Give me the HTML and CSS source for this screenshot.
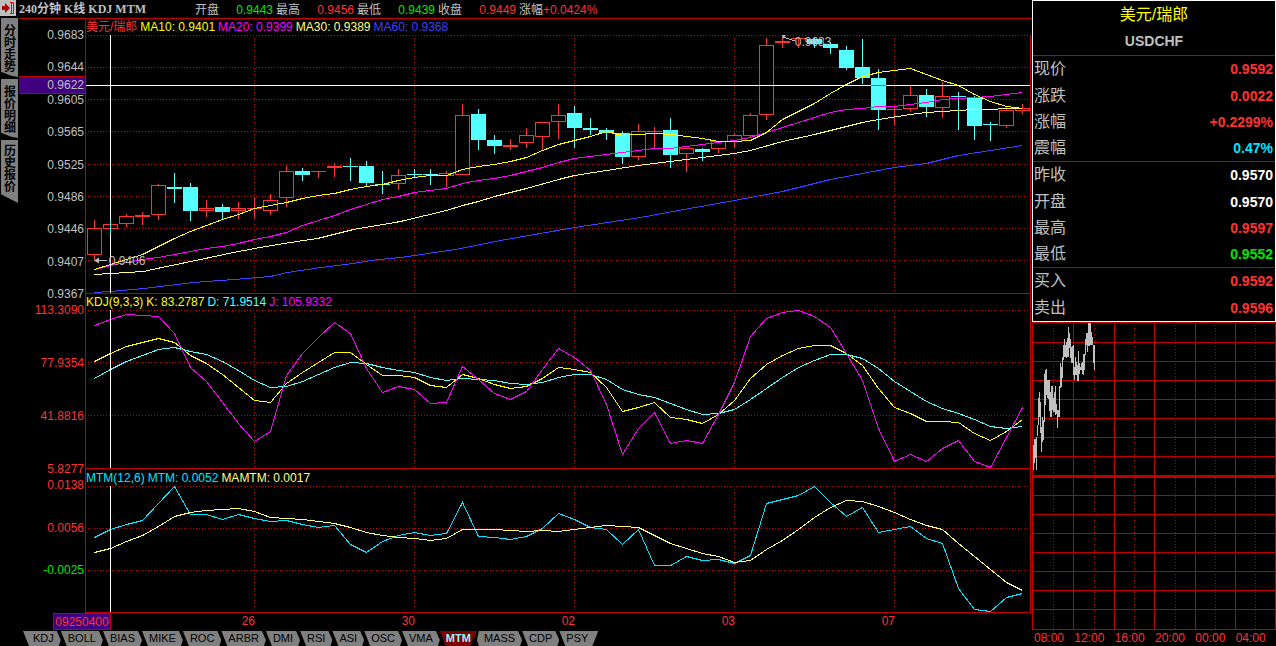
FILE: index.html
```html
<!DOCTYPE html>
<html lang="zh-CN">
<head>
  <meta charset="utf-8">
  <title>美元/瑞郎 USDCHF</title>
  <link rel="stylesheet" href="styles.css">
</head>
<body>
<div class="app">

  <!-- left rail -->
  <nav class="rail">
    <button class="exit" aria-label="退出">
      <svg width="16" height="16" viewBox="0 0 16 16">
        <rect width="16" height="16" fill="#c0c0c0"/>
        <path d="M2 6h3V3l5 5-5 5v-3H2z" fill="#b00000"/>
        <path d="M10 2.500h3.500v11H10M11.500 3v10" fill="none" stroke="#e01010"/>
      </svg>
    </button>
    <button class="rail-tab">分时走势</button>
    <button class="rail-tab">报价明细</button>
    <button class="rail-tab last">历史报价</button>
  </nav>

  <!-- charts -->
  <main class="main">
    <header class="top">
      <h1>240分钟 K线 KDJ MTM</h1>
      <div class="ohlc">
        <div><span>开盘</span><span class="green">0.9443</span></div>
        <div><span>最高</span><span class="red">0.9456</span></div>
        <div><span>最低</span><span class="green">0.9439</span></div>
        <div><span>收盘</span><span class="red">0.9449</span></div>
        <div><span>涨幅</span><span class="red">+0.0424%</span></div>
      </div>
    </header>

    <section class="pane pane-k">
      <ul class="axis">
        <li>0.9683</li><li>0.9644</li><li>0.9605</li><li>0.9565</li><li>0.9525</li>
        <li>0.9486</li><li>0.9446</li><li>0.9407</li><li>0.9367</li>
      </ul>
      <span class="price-tag">0.9622</span>
      <div class="plot">
        <div class="legend">
          <span class="red">美元/瑞郎</span>
          <span class="yellow">MA10: 0.9401</span>
          <span class="magenta">MA20: 0.9399</span>
          <span class="pale">MA30: 0.9389</span>
          <span class="blue">MA60: 0.9368</span>
        </div>
        <svg id="kline" viewBox="86 35 944 258" preserveAspectRatio="none"></svg>
        <span class="mark mark-low">0.9406</span>
        <span class="mark mark-high">0.9683</span>
      </div>
    </section>

    <section class="pane pane-kdj">
      <ul class="axis red">
        <li>113.3090</li><li>77.9354</li><li>41.8816</li><li>5.8277</li>
      </ul>
      <div class="plot">
        <div class="legend">
          <span class="yellow">KDJ(9,3,3)</span>
          <span class="yellow">K: 83.2787</span>
          <span class="cyan">D: 71.9514</span>
          <span class="magenta">J: 105.9332</span>
        </div>
        <svg id="kdj" viewBox="86 310 944 158" preserveAspectRatio="none"></svg>
      </div>
    </section>

    <section class="pane pane-mtm">
      <ul class="axis red">
        <li>0.0138</li><li>0.0056</li><li class="green">-0.0025</li><li></li>
      </ul>
      <div class="plot">
        <div class="legend">
          <span class="aqua">MTM(12,6)</span>
          <span class="aqua">MTM: 0.0052</span>
          <span class="pale">MAMTM: 0.0017</span>
        </div>
        <svg id="mtm" viewBox="86 486 944 126" preserveAspectRatio="none"></svg>
      </div>
    </section>

    <div class="dates">
      <span class="date-tag">09250400</span>
      <span>26</span><span>30</span><span>02</span><span>03</span><span>07</span>
    </div>

    <div class="tabs">
      <button>KDJ</button>
      <button>BOLL</button>
      <button>BIAS</button>
      <button>MIKE</button>
      <button>ROC</button>
      <button>ARBR</button>
      <button>DMI</button>
      <button>RSI</button>
      <button>ASI</button>
      <button>OSC</button>
      <button>VMA</button>
      <button class="active">MTM</button>
      <button class="after">MASS</button>
      <button>CDP</button>
      <button class="end">PSY</button>
    </div>
  </main>

  <!-- quote -->
  <aside class="side">
    <div class="quote">
      <h2>美元/瑞郎</h2>
      <p class="code">USDCHF</p>
      <table>
        <tr class="line"><th scope="row">现价</th><td class="red">0.9592</td></tr>
        <tr><th scope="row">涨跌</th><td class="red">0.0022</td></tr>
        <tr><th scope="row">涨幅</th><td class="red">+0.2299%</td></tr>
        <tr><th scope="row">震幅</th><td class="aqua">0.47%</td></tr>
        <tr class="line"><th scope="row">昨收</th><td>0.9570</td></tr>
        <tr><th scope="row">开盘</th><td>0.9570</td></tr>
        <tr><th scope="row">最高</th><td class="red">0.9597</td></tr>
        <tr><th scope="row">最低</th><td class="green">0.9552</td></tr>
        <tr class="line"><th scope="row">买入</th><td class="red">0.9592</td></tr>
        <tr><th scope="row">卖出</th><td class="red">0.9596</td></tr>
      </table>
    </div>
    <svg id="tick" viewBox="1032 322 244 308" preserveAspectRatio="none"></svg>
    <div class="hours">
      <span>08:00</span><span>12:00</span><span>16:00</span><span>20:00</span><span>00:00</span><span>04:00</span>
    </div>
  </aside>

</div>
<script src="chart.js"></script>
</body>
</html>
```

FILE: styles.css
```css
* {
  box-sizing: border-box;
}
body {
  margin: 0;
  background: #000;
  color: #c0c0c0;
  font: 12px/16px "Liberation Sans", Arial, "Noto Sans CJK SC", sans-serif;
}
h1, h2, p, ul {
  margin: 0;
  padding: 0;
}
button {
  border: 0;
  padding: 0;
  font: inherit;
  cursor: pointer;
}

/* text colours */
.red { color: #ff3232; }
.green { color: #00e600; }
.yellow { color: #ffff00; }
.magenta { color: #ff00ff; }
.pale { color: #ffff80; }
.blue { color: #4040ff; }
.cyan { color: #54ffff; }
.aqua { color: #00e6ff; }

.app {
  display: grid;
  grid-template-columns: 19px minmax(0, 1fr) 244px;
  grid-template-rows: minmax(0, 1fr);
  height: 100vh;
  min-height: 600px;
}

/* left rail */
.rail {
  display: flex;
  flex-direction: column;
  gap: 2px;
  padding-right: 1px;
}
.exit {
  height: 16px;
  background: none;
  text-align: left;
}
.exit svg {
  display: block;
}
.rail-tab {
  height: 59px;
  margin-left: 1px;
  padding: 2px 2px 0 3px;
  background: #808080;
  color: #000;
  font-weight: bold;
  line-height: 12px;
  word-break: break-all;
  display: block;
  clip-path: polygon(0 0, 100% 0, 100% 100%, 60% 98%, 0 91%);
}
.rail-tab.last {
  height: 63px;
  padding: 0 2px 5px 3px;
  clip-path: polygon(0 0, 100% 0, 100% 100%, 0 86%);
}

/* main column */
.main {
  display: flex;
  flex-direction: column;
}
.top {
  display: flex;
  height: 19px;
  border-bottom: 1px solid #c00000;
}
.top h1 {
  width: 176px;
  font: bold 12px/18px "Liberation Serif", "Noto Sans CJK SC", serif;
  white-space: nowrap;
}
.ohlc {
  display: flex;
  gap: 3px;
  line-height: 20px;
  white-space: nowrap;
}
.ohlc div {
  display: flex;
  justify-content: space-between;
  width: 78px;
}

.pane {
  display: grid;
  grid-template-columns: 66px minmax(0, 1fr);
  position: relative;
  min-height: 0;
  padding-right: 1px;
}
.pane-k { flex: 259 1 16px; }
.pane-kdj { flex: 159 1 16px; }
.pane-mtm { flex: 127 1 17px; }

.axis {
  display: flex;
  flex-direction: column;
  justify-content: space-between;
  padding: 16px 1px 0 0;
  list-style: none;
  text-align: right;
  line-height: 0;
}
.price-tag {
  position: absolute;
  left: 0;
  top: 57px;
  width: 66px;
  padding-right: 1px;
  border: solid #c00000;
  border-width: 1px 0;
  background: #400080;
  text-align: right;
}
.plot {
  display: flex;
  flex-direction: column;
  position: relative;
  min-height: 0;
  border-left: 1px solid #c00000;
}
.legend {
  display: flex;
  gap: 3px;
  height: 16px;
  border-right: 1px solid #c00000;
  white-space: nowrap;
}
.pane-k .legend {
  border-right: 0;
}
.pane-mtm .legend {
  height: 17px;
  line-height: 18px;
}
.plot svg {
  flex: 1;
  min-height: 0;
  width: 100%;
  border: solid #c00000;
  border-width: 0 1px 1px 0;
}
.mark {
  position: absolute;
  line-height: 16px;
}
.mark-low {
  left: 2.4%;
  top: 85%;
}
.mark-high {
  left: 75%;
  top: 5.5%;
}

/* shapes drawn by chart.js */
svg line, svg polyline, svg rect {
  shape-rendering: crispEdges;
  vector-effect: non-scaling-stroke;
}
polyline { fill: none; }
.grid { stroke: #c00000; }
.dot { stroke: #c00000; stroke-dasharray: 1 2; }
.up { stroke: #ff3232; fill: #000; }
.down { stroke: #54ffff; fill: #54ffff; }
.cross { stroke: #fff; }
.s-yellow { stroke: #ffff00; }
.s-magenta { stroke: #ff00ff; }
.s-pale { stroke: #ffff80; }
.s-blue { stroke: #4040ff; }
.s-cyan { stroke: #54ffff; }
.s-aqua { stroke: #00e6ff; }
.s-gray { stroke: #c0c0c0; }
.f-gray { fill: #c0c0c0; }

.dates {
  display: grid;
  grid-template-columns: 92px 144fr 160fr 160fr 160fr 160fr 137fr;
  height: 18px;
  color: #ff3232;
  text-align: right;
}
.date-tag {
  justify-self: end;
  width: 58px;
  height: 17px;
  border: 1px solid #c00000;
  background: #400080;
  text-align: center;
}

/* indicator tabs */
.tabs {
  display: flex;
  height: 15px;
  padding-left: 4px;
}
.tabs button {
  padding: 0 7px;
  background: #808080;
  color: #000;
  font-size: 11px;
  line-height: 15px;
  clip-path: polygon(0 0, calc(100% - 4px) 0, 100% 60%, calc(100% - 2px) 100%, 6px 100%);
}
.tabs button:first-child {
  padding-left: 10px;
}
.tabs .active {
  padding: 0 6px;
  background: #800000;
  color: #80ffff;
  font-weight: bold;
  clip-path: polygon(0 0, 100% 0, calc(100% - 7px) 100%, 6px 100%);
}
.tabs .after {
  clip-path: polygon(2px 0, calc(100% - 4px) 0, 100% 60%, calc(100% - 2px) 100%, 2px 100%, 0 60%);
}
.tabs .end {
  padding-right: 10px;
  clip-path: polygon(0 0, 100% 0, calc(100% - 6px) 100%, 6px 100%);
}

/* right column */
.side {
  display: flex;
  flex-direction: column;
}
.quote {
  border: 1px solid #fff;
}
.quote h2 {
  color: #ffff00;
  font-size: 16px;
  font-weight: normal;
  line-height: 28px;
  text-align: center;
}
.code {
  padding-bottom: 2px;
  font-size: 14px;
  font-weight: bold;
  line-height: 24px;
  text-align: center;
}
.quote table {
  width: 100%;
  height: 266px;
  border-spacing: 0;
}
.quote th, .quote td {
  padding: 0 2px 0 1px;
}
.quote th {
  font-size: 16px;
  font-weight: normal;
  text-align: left;
}
.quote td {
  font-size: 14px;
  font-weight: bold;
  text-align: right;
}
.quote td:not([class]) {
  color: #fff;
}
.line th, .line td {
  border-top: 1px solid #c00000;
}
#tick {
  flex: 1;
  min-height: 0;
  width: 100%;
}
.hours {
  display: grid;
  grid-template-columns: repeat(6, 1fr);
  height: 16px;
  padding-left: 2px;
  color: #ff3232;
}
```

FILE: chart.js
```js
const X0 = 94, STEP = 16;
const DAYS = [254, 414, 574, 734, 894];

// [high, top, bottom, low, up]
const candles = [
  [220,228,254,260,1],[219,224,228,233,1],[214,216,223,226,1],[212,215,216,224,1],[184,185,214,219,1],
  [173,187,188,202,0],[183,187,210,220,0],[200,208,210,216,1],[204,207,211,218,0],[202,208,210,218,1],
  [197,208,208,217,1],[194,200,210,214,1],[166,171,197,206,1],[168,171,174,180,0],[171,171,171,177,1],
  [163,166,167,176,1],[158,166,166,180,0],[161,166,182,186,0],[171,184,184,193,0],[169,175,183,189,1],
  [169,174,174,177,0],[169,174,174,184,0],[171,173,175,186,1],[104,115,174,174,1],[109,114,139,149,0],
  [135,140,145,153,0],[139,145,146,149,1],[128,135,142,147,1],[122,122,136,149,1],[104,115,121,138,1],
  [106,113,127,147,0],[118,128,129,134,0],[128,130,132,139,0],[131,133,156,163,0],[124,131,156,159,1],
  [127,131,131,148,1],[118,130,154,167,0],[148,148,153,171,1],[148,149,151,160,0],[141,141,148,152,1],
  [133,135,141,147,1],[113,115,135,137,1],[38,45,114,119,1],[37,41,42,47,1],[38,38,38,47,1],
  [38,39,43,47,0],[42,44,47,53,0],[46,50,67,69,0],[39,67,77,83,0],[69,78,109,129,0],
  [106,109,109,124,1],[86,95,108,110,1],[89,95,106,116,0],[82,96,107,117,1],[92,96,96,129,0],
  [96,98,125,139,0],[122,124,124,140,0],[106,110,125,127,1],[104,108,110,113,1]
];

const ma10 = [269,264,259,254,246,238,231,225,219,214,208,205,202,198,195,193,189,186,184,180,177,175,175,169,166,164,161,157,150,144,140,136,131,135,134,133,134,136,138,141,141,140,132,119,111,103,93,84,76,72,70,68,74,80,85,94,101,106,108];
const ma20 = [269,265,262,259,257,254,251,248,246,243,239,236,232,225,220,215,209,204,199,196,192,190,188,183,180,178,175,171,167,162,158,156,154,152,150,148,148,146,144,142,140,137,132,127,122,117,112,109,108,106,106,104,102,99,98,97,96,94,92];
// longer averages are sparse: [x, y]
const ma30 = [[94,274],[110,273],[143,271],[166,266],[200,259],[233,252],[254,248],[283,243],[317,238],[353,229],[400,221],[446,210],[462,205],[478,201],[494,196],[526,188],[558,179],[574,175],[606,170],[638,165],[670,161],[702,157],[734,153],[750,150],[782,141],[814,134],[846,126],[862,122],[878,119],[910,114],[926,112],[958,110],[974,109],[1022,108]];
const ma60 = [[94,292],[110,291],[143,288],[193,282],[233,279],[270,276],[287,272],[320,267],[353,263],[370,260],[400,257],[455,249],[500,240],[574,227],[640,217],[678,210],[734,200],[782,191],[830,179],[894,167],[926,163],[958,155],[990,150],[1022,145]];

const kLine = [361,353,346,342,338,342,355,363,374,387,400,402,383,372,362,352,352,364,375,375,377,385,387,374,378,384,388,386,378,367,369,372,387,411,407,402,417,419,423,414,400,378,364,355,348,345,345,353,365,388,407,413,421,421,422,433,440,431,419];
const dLine = [378,369,361,355,349,347,351,354,361,370,380,387,386,381,374,367,362,363,367,370,372,377,380,378,379,380,383,384,382,377,374,374,379,389,394,397,403,409,414,413,409,399,388,377,367,360,354,354,358,368,381,391,401,408,413,419,426,428,426];
const jLine = [325,319,314,315,316,333,367,381,402,423,441,431,375,353,337,322,333,368,392,386,389,403,402,366,379,393,399,391,369,348,357,370,404,454,428,412,443,440,443,414,382,336,318,312,310,316,327,353,380,428,461,454,461,448,440,461,467,437,407];

const mtm = [537,529,524,520,503,486,514,514,519,514,518,521,520,524,527,525,544,552,541,535,532,535,533,502,536,537,539,536,528,513,519,527,529,544,529,565,565,556,560,559,563,555,503,499,495,486,502,516,507,532,529,526,538,543,588,609,611,597,593];
const mamtm = [552,548,541,535,526,516,512,510,509,508,511,517,518,519,521,523,527,532,535,537,538,540,538,529,529,529,530,531,530,531,529,527,525,526,527,535,543,548,553,556,562,560,549,540,529,517,507,500,501,506,512,519,525,529,543,556,569,582,590];

// intraday high/low for each minute column, from 08:00
const ticks = [[445,470],[439,463],[439,458],[437,470],[425,436],[398,425],[392,417],[402,433],[427,452],[417,442],[420,440],[374,422],[370,405],[369,395],[380,398],[380,399],[380,411],[392,417],[386,417],[386,410],[398,412],[392,412],[386,415],[404,414],[410,428],[410,417],[386,417],[363,388],[367,387],[357,378],[345,360],[339,357],[345,357],[342,358],[338,357],[327,357],[333,348],[339,358],[347,363],[346,363],[345,375],[367,380],[357,375],[362,375],[365,381],[351,381],[363,374],[367,370],[363,370],[362,374],[354,375],[354,370],[339,355],[333,345],[333,352],[323,346],[323,346],[323,345],[332,345],[337,345],[345,363],[345,370]];

function line(x1, y1, x2, y2, cls) {
  return `<line x1="${x1}" y1="${y1}" x2="${x2}" y2="${y2}" class="${cls}"/>`;
}

function hline(x1, x2, y, cls) {
  return line(x1, y + 0.5, x2, y + 0.5, cls);
}

function vline(x, y1, y2, cls) {
  return line(x + 0.5, y1, x + 0.5, y2, cls);
}

function curve(points, cls) {
  const list = points.map((p, i) => Array.isArray(p) ? p : [X0 + i * STEP, p]);
  return `<polyline class="${cls}" points="${list.map(([x, y]) => `${x + 0.5},${y + 0.5}`).join(' ')}"/>`;
}

function grid(rows, top, bottom) {
  return rows.map(y => hline(88, 1030, y, 'dot')).join('') +
    DAYS.map(x => vline(x, top + 3, bottom, 'dot')).join('');
}

function candle([high, top, bottom, low, up], i) {
  const x = X0 + i * STEP;
  const cls = up ? 'up' : 'down';
  let out = vline(x, high, low + 1, cls);
  if (top === bottom) {
    out += hline(x - 7, x + 8, top, cls);
  } else {
    out += `<rect x="${x - 6.5}" y="${top + 0.5}" width="14" height="${bottom - top}" class="${cls}"/>`;
  }
  return out;
}

document.getElementById('kline').innerHTML =
  grid([35, 67, 99, 131, 164, 196, 228, 260], 35, 293) +
  candles.map(candle).join('') +
  curve(ma60, 's-blue') + curve(ma30, 's-pale') + curve(ma20, 's-magenta') + curve(ma10, 's-yellow') +
  hline(86, 1030, 85, 'cross') + vline(110, 35, 293, 'cross') +
  hline(871, 886, 85, 'up') + vline(110, 219, 234, 'down') +
  // arrows to the lowest and highest price
  hline(97, 107, 260, 's-gray') + '<path d="M94 260.500l5-3v6z" class="f-gray"/>' +
  line(783, 37, 795, 41, 's-gray') + '<path d="M782 35h4l-3 4z" class="f-gray"/>';

document.getElementById('kdj').innerHTML =
  grid([310, 362, 415], 310, 468) +
  curve(kLine, 's-yellow') + curve(dLine, 's-cyan') + curve(jLine, 's-magenta') +
  vline(110, 310, 468, 'cross');

document.getElementById('mtm').innerHTML =
  grid([486, 528, 570], 486, 612) +
  curve(mtm, 's-aqua') + curve(mamtm, 's-pale') +
  vline(110, 486, 612, 'cross');

document.getElementById('tick').innerHTML =
  [322, 342, 361, 380, 399, 418, 437, 456, 475, 476, 477, 495, 514, 533, 552, 571, 590, 609, 629]
    .map(y => hline(1032, 1276, y, 'grid')).join('') +
  [1032, 1073, 1114, 1154, 1195, 1235, 1275].map(x => vline(x, 322, 630, 'grid')).join('') +
  [1053, 1094, 1134, 1175, 1215, 1255].map(x => vline(x, 325, 629, 'dot')).join('') +
  ticks.map(([a, b], i) => vline(1033 + i, a, b, 's-gray')).join('');
```
